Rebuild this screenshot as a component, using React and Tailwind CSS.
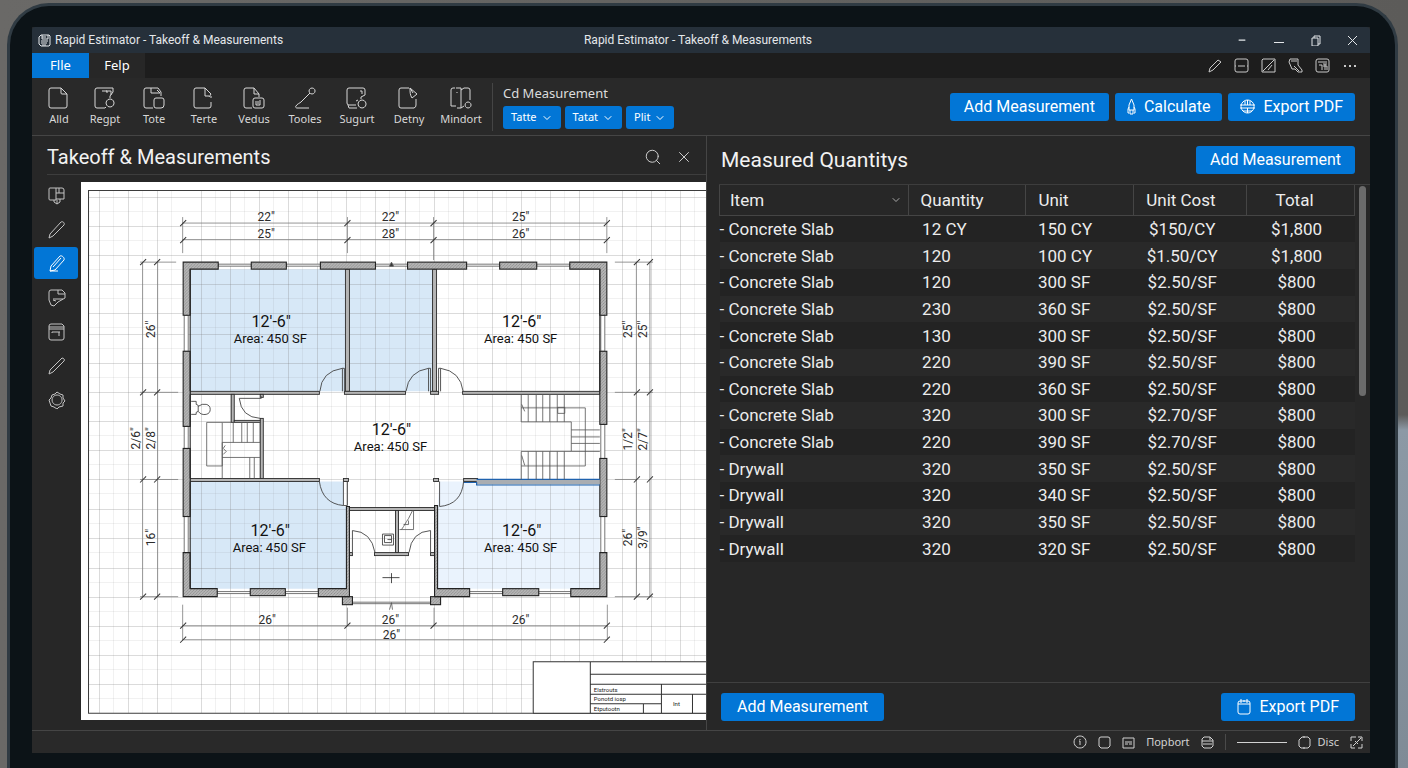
import { useState } from 'react';
import { ChevronDown, Minus, Search, X } from 'lucide-react';

const ribbonTools = [
  { label: 'Alld', width: 'w-11', d: 'M3 1h10l6 6v12a2 2 0 0 1-2 2H3a2 2 0 0 1-2-2V3a2 2 0 0 1 2-2zM13 1v5a1 1 0 0 0 1 1h5' },
  { label: 'Regpt', width: 'w-12', d: 'M11 21H3a2 2 0 0 1-2-2V3a2 2 0 0 1 2-2h16v4l-3 4v2M8 4h5v2M12 4h5v4M16 12a4 4 0 1 0 .1 0zM12 20l-1 1' },
  { label: 'Tote', width: 'w-[50px]', d: 'M10 21H3a2 2 0 0 1-2-2V3a2 2 0 0 1 2-2h12l3 4v4M8 1v5h9M14 3l3 3M13 11h6a2 2 0 0 1 2 2v5a3 3 0 0 1-3 3h-5a2 2 0 0 1-2-2v-6a2 2 0 0 1 2-2z' },
  { label: 'Terte', width: 'w-[50px]', d: 'M12 1H3a2 2 0 0 0-2 2v16a2 2 0 0 0 2 2h13a2 2 0 0 0 2-2v-4M12 1l6 6-2 3M12 1v8h4M18 9v2' },
  { label: 'Vedus', width: 'w-[50px]', d: 'M9 21H3a2 2 0 0 1-2-2V3a2 2 0 0 1 2-2h8l5 6v3M11 1v6h5M12 11h7a2 2 0 0 1 2 2v6a2 2 0 0 1-2 2h-7a2 2 0 0 1-2-2v-6a2 2 0 0 1 2-2zM13 14v4h4v-5M15 14v3' },
  { label: 'Tooles', width: 'w-[52px]', d: 'M18 1a3 3 0 1 0 .1 0zM16 6L7 15c-1 1-4 2-5 4-1 1 0 2 1 2h12' },
  { label: 'Sugurt', width: 'w-[52px]', d: 'M10 18H3a2 2 0 0 1-2-2V3a2 2 0 0 1 2-2h14a2 2 0 0 1 2 2v5l-4 2v2M14 4h2v3M2 18l1 3h8M16 13a4 4 0 1 0 .1 0zM10 14l2-1' },
  { label: 'Detny', width: 'w-[52px]', d: 'M11 1H3a2 2 0 0 0-2 2v16a2 2 0 0 0 2 2h13a3 3 0 0 0 2-3v-6M12 1l7 6-5 4c-2-3-2-6-2-10zM12 1l3 5' },
  { label: 'Mindort', width: 'w-[52px]', d: 'M5 1H3a2 2 0 0 0-2 2v16h5M6 1h5M11 1v20M11 3l3-2h4a2 2 0 0 1 2 2v10M7 21h4l3-2M18 15a3 3 0 1 0 .1 0zM7 5v1' },
];

const sideTools = [
  { label: 'Layers', d: 'M3 2h6v12H3a1 1 0 0 1-1-1V3a1 1 0 0 1 1-1zM9 2h6a2 2 0 0 1 2 2v9H9M9 7h8M12 2v5M7 14v2l3 2 3-2v-3M10 14v4' },
  { label: 'Line', d: 'M14 2c2-1 4 1 3 3L6 16l-4 2 1-4z' },
  { label: 'Highlighter', d: 'M13 2c2-1 5 2 4 4L8 16l-5 1 1-5zM6 13l8-9M3 17h8' },
  { label: 'Note', d: 'M2 4a2 2 0 0 1 2-2h11l3 3v5l-7 4-4 4-3-1-2-5zM11 2v4h7M6 11h10M6 12l3 1' },
  { label: 'Schedule', d: 'M4 2h11l2 2v12a2 2 0 0 1-2 2H4a2 2 0 0 1-2-2V4a2 2 0 0 1 2-2zM2 5h15M2 7h15M5 10h8M12 10v4M5 10v1' },
  { label: 'Cut', d: 'M15 2c2 0 3 2 2 3L6 16l-4 2 1-4z' },
  { label: 'Settings', d: 'M10 2l3 2 3 1v3l2 3-2 2v3l-4 1-2 2-3-2-3-1-1-3-1-3 2-2 1-3 3-1zM10 5a5 5 0 1 0 .1 0z' },
];

const quickActions = [
  { label: 'Edit', d: 'M12 3l3 2-8 8-4 2 1-4z' },
  { label: 'Panel', d: 'M4 2h9a2 2 0 0 1 2 2v9a2 2 0 0 1-2 2H4a2 2 0 0 1-2-2V4a2 2 0 0 1 2-2zM5 9h7M2 9h1M14 9h1' },
  { label: 'Contrast', d: 'M3 2h12v13H2V3zM3 14L14 3M8 13l4-5' },
  { label: 'Comment', d: 'M3 2h8v6l4 5v2h-4l-3-3H5L2 5zM4 4h6M7 9l5 5' },
  { label: 'Library', d: 'M4 2h9a2 2 0 0 1 2 2v9a2 2 0 0 1-2 2H4a2 2 0 0 1-2-2V4a2 2 0 0 1 2-2zM4 5h9M5 8h3v5M9 7h4M9 9h4v4M11 7v6' },
];

const rows = [
  ['Concrete Slab', '12 CY', '150 CY', '$150/CY', '$1,800'],
  ['Concrete Slab', '120', '100 CY', '$1.50/CY', '$1,800'],
  ['Concrete Slab', '120', '300 SF', '$2.50/SF', '$800'],
  ['Concrete Slab', '230', '360 SF', '$2.50/SF', '$800'],
  ['Concrete Slab', '130', '300 SF', '$2.50/SF', '$800'],
  ['Concrete Slab', '220', '390 SF', '$2.50/SF', '$800'],
  ['Concrete Slab', '220', '360 SF', '$2.50/SF', '$800'],
  ['Concrete Slab', '320', '300 SF', '$2.70/SF', '$800'],
  ['Concrete Slab', '220', '390 SF', '$2.70/SF', '$800'],
  ['Drywall', '320', '350 SF', '$2.50/SF', '$800'],
  ['Drywall', '320', '340 SF', '$2.50/SF', '$800'],
  ['Drywall', '320', '350 SF', '$2.50/SF', '$800'],
  ['Drywall', '320', '320 SF', '$2.50/SF', '$800'],
];

const Icon = ({ d, w = 18, h = w, className = '' }) => (
  <svg width={w} height={h} viewBox={`0 0 ${w} ${h}`} fill="none" stroke="currentColor" strokeWidth="1" strokeLinejoin="round" className={`shrink-0 ${className}`} aria-hidden="true">
    <path d={d} />
  </svg>
);

const BlueButton = ({ children, className = '' }) => (
  <button className={`flex h-7 items-center justify-center gap-2 rounded-[3px] bg-[#0276d6] font-[Roboto,sans-serif] text-base text-white hover:bg-[#1a86e0] ${className}`}>
    {children}
  </button>
);

/* ---------- floor plan ---------- */

const gridX = [99.5, 128.5, 157.5, 201.5, 230.5, 259.5, 288.5, 317.5, 346.5, 375.5, 404.5, 433.5, 462.5, 491.5, 520.5, 549.5, 578.5, 621.5, 650.5, 679.5];
const gridY = [197.5, 226.5, 255.5, 284.5, 313.5, 334.5, 363.5, 392.5, 421.5, 450.5, 479.5, 508.5, 537.5, 567.5, 596.5, 625.5, 654.5, 683.5];

// x, y, width, height
const outerWalls = [
  [251, 262, 35, 7], [320, 262, 55, 7], [407, 262, 59, 7], [499, 262, 37, 7],
  [183, 351, 7, 75], [183, 448, 7, 68], [599, 351, 7, 73], [599, 458, 7, 58],
  [250, 588, 35, 7], [502, 588, 36, 7],
  [342, 596, 10, 8], [430, 596, 10, 8],
];
const cornerWalls = [
  'M183 262h35v7h-28v46h-7z',
  'M606 262h-37v7h30v46h7z',
  'M183 596h34v-8h-27v-36h-7z',
  'M606 596h-36v-8h29v-36h7z',
  'M318 588h28v-82h3v90h-31z',
  'M469 588h-32v-83h-3v91h35z',
];
const innerWalls = [
  [345, 269, 4, 122], [432, 269, 4, 122], [190, 391, 129, 3], [344, 391, 61, 3],
  [430, 391, 8, 3], [462, 391, 137, 3], [190, 478, 129, 3], [343, 478, 5, 3],
  [433, 478, 5, 3], [463, 478, 14, 3], [348, 507, 88, 3], [395, 510, 3, 42],
  [374, 552, 34, 3], [348, 552, 4, 3], [430, 552, 4, 3], [231, 394, 3, 28],
  [234, 420, 28, 2], [260, 418, 3, 60], [260, 394, 3, 3],
];
const windowsH = [[218, 264, 33], [286, 264, 34], [375, 264, 32], [466, 264, 33], [536, 264, 33], [217, 591, 33], [285, 591, 33], [469, 591, 33], [538, 591, 32]];
const windowsV = [[184, 315, 36], [184, 426, 22], [184, 516, 36], [600, 315, 36], [600, 424, 34], [600, 516, 36]];

const roomLabels = [[271, 328], [521, 328], [391, 436], [270, 536], [521, 536]];

const horizontalDims = [
  [266, 221, '22"'], [266, 238, '25"'], [390, 221, '22"'], [390, 238, '28"'], [520, 221, '25"'], [520, 238, '26"'],
  [267, 623, '26"'], [390, 623, '26"'], [520, 623, '26"'], [391, 638, '26"'],
];
const verticalDims = [
  [155, 329, '26"'], [140, 438, '2/6"'], [155, 438, '2/8"'], [155, 537, '16"'],
  [631, 329, '25"'], [646, 329, '25"'], [631, 439, '1/2"'], [646, 439, '2/7"'], [631, 537, '26"'], [646, 537, '3/9"'],
];

const ticks = [
  ...[183, 347, 433, 606].flatMap((x) => [[x, 223], [x, 240], [x, 625]]),
  [183, 639], [606, 639],
  ...[262, 392, 479, 596].flatMap((y) => [[143, y], [157, y], [636, y], [649, y]]),
];

const FloorPlan = () => (
  <svg viewBox="81 182 624 538" preserveAspectRatio="xMinYMin slice" className="block h-full w-full bg-white" role="img" aria-label="Floor plan">
    <defs>
      <pattern id="hatch" width="3" height="3" patternUnits="userSpaceOnUse">
        <rect width="3" height="3" fill="#b4b4b4" />
        <path d="M0 3L3 0" stroke="#8a8a8a" strokeWidth="0.7" />
      </pattern>
    </defs>

    <g fill="#d7e8f7">
      <path d="M190 269h155v122H190zM349 269h83v122h-83zM190 481h153v25h3v82H190z" />
      <path d="M437 506l2-25h24l14 3h122v104H437z" fill="#eaf3fd" />
    </g>

    <g stroke="#8c8c8c" strokeOpacity="0.12" shapeRendering="crispEdges">
      {gridX.map((x) => <path key={x} d={`M${x + 14} 190V712`} />)}
      {gridY.map((y) => <path key={y} d={`M88 ${y + 14}H705`} />)}
    </g>
    <g stroke="#7c7c7c" strokeOpacity="0.28" shapeRendering="crispEdges">
      {gridX.map((x) => <path key={x} d={`M${x} 190V712`} />)}
      {gridY.map((y) => <path key={y} d={`M88 ${y}H705`} />)}
    </g>
    <path d="M705 190.500H88.500V712.500H705" fill="none" stroke="#3c3c3c" />

    {/* dimension lines */}
    <g fill="none" stroke="#7d7d7d" strokeWidth="0.8">
      <path d="M182 223H606M182 239.500H606M182 625H606M182 639H606" />
      <path d="M142.500 262V596M157.500 262V596M635.500 262V596M649 262V596" />
      <path d="M182.500 217V253M347 217V253M433 217V260M606 217V253M182.500 604V639M347 607V625M433.500 607V625M606.500 604V639" />
      <path d="M140 262H176M140 392H178M140 479H178M140 596H178M614 262H652M614 392H652M614 479H636M614 596H652" />
    </g>
    <g stroke="#333" strokeWidth="1">
      {ticks.map(([x, y]) => <path key={`${x}-${y}`} d={`M${x - 3} ${y + 3}l6-6`} />)}
    </g>

    {/* windows */}
    <g fill="#fff" stroke="#555" strokeWidth="0.8">
      {windowsH.map(([x, y, w]) => <rect key={`${x}-${y}`} x={x} y={y} width={w} height="2" />)}
      {windowsV.map(([x, y, h]) => <rect key={`${x}-${y}`} x={x} y={y} width="4" height={h} />)}
      <path d="M352 601.500H430M352 603H430" />
    </g>

    {/* walls */}
    <g fill="#b5b5b5" stroke="#2b2b2b" strokeWidth="0.9">
      {innerWalls.map(([x, y, w, h]) => <rect key={`${x}-${y}`} x={x} y={y} width={w} height={h} />)}
    </g>
    <g fill="url(#hatch)" stroke="#222" strokeWidth="1.1">
      {outerWalls.map(([x, y, w, h]) => <rect key={`${x}-${y}`} x={x} y={y} width={w} height={h} />)}
      {cornerWalls.map((d) => <path key={d} d={d} />)}
    </g>
    <path d="M190 391V269M190 588V481M190 478V394M599 269V391" fill="none" stroke="#222" strokeWidth="1.1" />
    <rect x="476" y="479" width="123" height="5" fill="#a9adb2" />
    <path d="M463 482h13v2.500h123M476 479h123" fill="none" stroke="#1f62ae" strokeWidth="1.2" />

    {/* doors */}
    <g fill="none" stroke="#444" strokeWidth="0.9">
      <path d="M342 391V368h2v23M342 368Q321 371 319.500 391" />
      <path d="M428 391V368h2v23M428 368Q408 371 405.500 391" />
      <path d="M438 391V368h2v23M440 368Q460 371 462.500 391" />
      <path d="M343 481v24h4v-24M343 505Q322 503 319 481" />
      <path d="M439 481v25M439 506Q461 504 463 481" />
      <path d="M352 552V530M352 530Q371 531 374.500 552" />
      <path d="M430 552V530M430 530Q411 531 408.500 552" />
      <path d="M239 398h22v-2M239 398Q241 417 260 418" />
    </g>

    {/* stairs and fixtures */}
    <g fill="none" stroke="#555" strokeWidth="0.8">
      <path d="M206.500 422H222V465.500H206.500zM222 422h38v20h-38v36M222 457h38M233 422v20M241.500 422v20M247 422v20M253 422v20M249.500 457v21M254 457v21M225 445l-2 3 3 3-3 3" />
      <path d="M520.500 421.500V394M527.500 394v27.500M535.500 394v27.500M542 394v27.500M549 394v27.500M556.500 394v27.500M563.500 394v27.500M520.500 421.500h50V451h-50v28M527.500 451v28M535.500 451v28M542 451v28M549 451v28M556.500 451v28M563.500 451v28" />
      <path d="M570.500 429.500H599M570.500 436.500H599M570.500 443H599M570.500 451H599M520.500 407.500H584.500V465.500H520.500M521 404l3 7M521 455l3 10M557 407h7v6h-7z" />
      <path d="M191 401h5v3l2 1v6l-2 1v2h-5M198 406q4-3 8-2 4 1 4 5t-4 5q-5 1-8-3" stroke="#333" />
      <path d="M382 533.500h11v11h-11zM384 535h7v7h-7zM387 539h4" stroke="#333" />
      <path d="M413 510V529H399M412 510l-4 8-2 3-3 5-2 3M403 524h5v-4" />
      <path d="M382 577h17M391 572.500v10" stroke="#222" />
      <path d="M389 609l2-7 1 7" />
      <path d="M389 266l2-4 2 4z" fill="#333" />
    </g>

    {/* title block */}
    <path d="M532 661H705V712.500H532z" fill="#fff" />
    <path d="M532.500 712V661H705M589.500 661V712M589.500 673.500H705M589.500 683.500H705M589.500 693.500H705M589.500 703H660.500M660.500 683.500V712M642.500 703V712M691.500 693.500V712M532 712.500H705" fill="none" stroke="#333" />
    <g fontSize="6" fill="#222" fontFamily="Roboto, sans-serif">
      <text x="593" y="691">Elstrouts</text>
      <text x="593" y="700">Ponotd iosp</text>
      <text x="593" y="710">Etputootn</text>
      <text x="672" y="705">Int</text>
    </g>

    <g fontSize="12" fill="#2b2b2b" textAnchor="middle" fontFamily="Roboto, sans-serif">
      {horizontalDims.map(([x, y, t]) => <text key={`${x}-${y}`} x={x} y={y}>{t}</text>)}
      {verticalDims.map(([x, y, t]) => <text key={`${x}-${y}`} transform={`translate(${x} ${y}) rotate(-90)`}>{t}</text>)}
    </g>
    <g fill="#111" textAnchor="middle" fontFamily="Roboto, sans-serif">
      {roomLabels.map(([x, y]) => (
        <g key={`${x}-${y}`}>
          <text x={x} y={y - 1} fontSize="16">12&apos;-6&quot;</text>
          <text x={x - 1} y={y + 15} fontSize="13">Area: 450 SF</text>
        </g>
      ))}
    </g>
  </svg>
);

/* ---------- app chrome ---------- */

const TitleBar = () => (
  <div className="grid h-[26px] shrink-0 grid-cols-[1fr_auto_1fr] items-center rounded-t-[3px] bg-[#26303a] pr-3 pl-[6px] font-[Roboto,sans-serif] text-xs text-[#e4e7ea]">
    <div className="flex items-center gap-1">
      <Icon w={13} d="M3 1h8l1 1v9l-1 1H3l-2-2V3zM4 1v4h6V1M4 3h4M3 7h7M3 9h6M4 11h4" />
      <span>Rapid Estimator - Takeoff &amp; Measurements</span>
    </div>
    <span>Rapid Estimator - Takeoff &amp; Measurements</span>
    <div className="flex justify-end gap-[26px]">
      <button aria-label="Hide"><Minus size={10} strokeWidth={3} /></button>
      <button aria-label="Minimize"><Icon w={11} d="M1 7.500h10" /></button>
      <button aria-label="Restore"><Icon w={11} d="M2 3h6v8H2zM4 3V1h6v8H8" /></button>
      <button aria-label="Close"><Icon w={11} d="M1 1l9 9M10 1l-9 9" /></button>
    </div>
  </div>
);

const MenuBar = () => (
  <nav className="flex h-[25px] shrink-0 bg-[#1d1d1d] text-[13px] text-white">
    <button className="w-[57px] bg-[#0276d6]">Flle</button>
    <button className="w-14 bg-[#272727]">Felp</button>
    <div className="ml-auto flex items-center gap-[10px] pr-3 text-[#c9c9c9]">
      {quickActions.map((a) => (
        <button key={a.label} aria-label={a.label}><Icon w={17} d={a.d} /></button>
      ))}
      <button aria-label="More">
        <svg width="17" height="17" viewBox="0 0 17 17" fill="currentColor"><path d="M3 8h2v2H3zM8 8h2v2H8zM13 8h2v2h-2z" /></svg>
      </button>
    </div>
  </nav>
);

const Ribbon = () => (
  <div className="flex h-[58px] shrink-0 items-center border-b border-[#454545] bg-[#292929] pr-[15px] pl-[5px]">
    {ribbonTools.map((t) => (
      <button key={t.label} className={`flex shrink-0 flex-col items-center gap-[2px] text-[11px] leading-4 text-[#d8d8d8] ${t.width}`}>
        <Icon w={22} d={t.d} />
        {t.label}
      </button>
    ))}
    <div className="ml-[5px] h-12 w-px bg-[#454545]" />
    <div className="ml-[10px] flex flex-col gap-1">
      <span className="text-[13px] leading-[18px] text-[#dcdcdc]">Cd Measurement</span>
      <div className="flex gap-1">
        {['Tatte', 'Tatat', 'Plit'].map((label) => (
          <button key={label} className="flex h-[23px] items-center gap-1 rounded-[3px] bg-[#0276d6] px-2 text-[11px] text-white">
            {label}
            <ChevronDown size={12} strokeWidth={2} />
          </button>
        ))}
      </div>
    </div>
    <div className="ml-auto flex gap-[6px]">
      <BlueButton className="px-[14px]">Add Measurement</BlueButton>
      <BlueButton className="px-3">
        <Icon w={9} h={17} d="M4.500 1L7 7v5H2V7zM2 9L1 11v4h1M7 9l1 2v4H7M3 12v4h3v-4" />
        Calculate
      </BlueButton>
      <BlueButton className="px-3">
        <Icon w={15} d="M7.500 1a6.500 6.500 0 1 0 .1 0zM0 6h15M0 9h15M7.500 1v5M5 2v4M10 2v4M3 12h9M7.500 9v5" />
        Export PDF
      </BlueButton>
    </div>
  </div>
);

const TakeoffPanel = () => {
  const [tool, setTool] = useState('Highlighter');

  return (
    <section className="flex min-w-0 flex-[674] flex-col border-r border-[#454545]">
      <header className="ml-[15px] flex h-[39px] shrink-0 items-center border-b border-[#3d3d3d] pt-1">
        <h2 className="text-xl leading-6 text-[#f2f2f2]">Takeoff &amp; Measurements</h2>
        <div className="ml-auto flex gap-[13px] pr-[13px] text-[#d0d0d0]">
          <button aria-label="Search"><Search size={18} strokeWidth={1.300} /></button>
          <button aria-label="Close panel"><X size={18} strokeWidth={1.300} /></button>
        </div>
      </header>
      <div className="flex min-h-0 flex-1 pb-[10px]">
        <div className="flex w-[49px] shrink-0 flex-col gap-[2px] pt-1 pl-[2px]">
          {sideTools.map((t) => (
            <button
              key={t.label}
              aria-label={t.label}
              onClick={() => setTool(t.label)}
              className={`flex h-8 w-11 items-center justify-center rounded-[3px] ${tool === t.label ? 'bg-[#0276d6] text-white' : 'text-[#c4c4c4]'}`}
            >
              <Icon w={19} d={t.d} />
            </button>
          ))}
        </div>
        <div className="min-w-0 flex-1 pt-[7px]">
          <FloorPlan />
        </div>
      </div>
    </section>
  );
};

const QuantitiesPanel = () => (
  <section className="flex min-w-0 flex-[663] flex-col">
    <header className="flex h-12 shrink-0 items-center justify-between pr-[15px] pl-[14px]">
      <h2 className="text-[21px] leading-6 text-[#f2f2f2]">Measured Quantitys</h2>
      <BlueButton className="px-[14px]">Add Measurement</BlueButton>
    </header>
    <div className="ml-3 flex min-h-0 flex-1 items-start border-t border-[#3d3d3d]">
      <table className="h-[377px] flex-1 table-fixed border-collapse text-left text-[17px] leading-5 text-[#ececec]">
        <thead>
          <tr className="h-[30px] border-b border-[#454545]">
            <th className="w-[189px] border-x border-[#454545] px-[10px] font-normal">
              <div className="flex items-center justify-between">
                Item
                <ChevronDown size={12} strokeWidth={2} className="-mr-1 text-[#a8a8a8]" />
              </div>
            </th>
            <th className="w-[118px] border-r border-[#454545] pl-3 font-normal">Quantity</th>
            <th className="w-[108px] border-r border-[#454545] pl-3 font-normal">Unit</th>
            <th className="w-[113px] border-r border-[#454545] pl-3 font-normal">Unit Cost</th>
            <th className="w-[108px] border-r border-[#454545] pr-3 text-center font-normal">Total</th>
          </tr>
        </thead>
        <tbody>
          {rows.map(([item, qty, unit, cost, total], i) => (
            <tr key={i} className="odd:bg-[#232323] even:bg-[#292929]">
              <td>- {item}</td>
              <td className="pl-[14px]">{qty}</td>
              <td className="pl-3">{unit}</td>
              <td className="pr-4 text-center">{cost}</td>
              <td className="pr-2 text-center">{total}</td>
            </tr>
          ))}
        </tbody>
      </table>
      <div className="mt-px mr-1 ml-1 h-[210px] w-[7px] rounded-full bg-[#6b6b6b]" />
    </div>
    <footer className="flex h-[48px] shrink-0 items-center justify-between border-t border-[#404040] pr-[15px] pl-[14px]">
      <BlueButton className="px-4">Add Measurement</BlueButton>
      <BlueButton className="px-4">
        <Icon w={14} h={16} d="M3 2h8a2 2 0 0 1 2 2v9a2 2 0 0 1-2 2H3a2 2 0 0 1-2-2V4a2 2 0 0 1 2-2zM1 5h12M4 0v4M10 0v4M7 1v2" />
        Export PDF
      </BlueButton>
    </footer>
  </section>
);

const StatusBar = () => (
  <footer className="flex h-[23px] shrink-0 items-center justify-end gap-[11px] border-t border-[#454545] bg-[#292929] pr-[7px] text-[11px] text-[#d2d2d2]">
    <Icon w={14} d="M7 1a6 6 0 1 0 .1 0zM7 6v4M7 4v1M6 6h1" />
    <Icon w={13} d="M3 1h7a2 2 0 0 1 2 2v7l-2 2H3l-2-2V3a2 2 0 0 1 2-2z" />
    <Icon w={13} d="M1 2h11v10H1zM3 6h7M3 8h3M7 8h3" />
    <span>Пopbort</span>
    <Icon w={13} d="M3 1h6l3 3v6l-2 2H3l-2-2V3zM1 5h11M2 8h9M9 1v3" />
    <div className="h-4 w-px bg-[#4a4a4a]" />
    <div className="h-px w-[50px] bg-[#d2d2d2]" />
    <div className="flex items-center gap-[7px]">
      <Icon w={13} d="M4 1h6l2 2v7l-2 2H3l-2-2V4zM6 0v2M6 11v2" />
      <span>Disc</span>
    </div>
    <Icon w={13} d="M1 5V1h5M8 1h4v4M12 8v4H8M5 12H1V8M3 10l8-8M5 5l3 3" />
  </footer>
);

export default function App() {
  return (
    <div className="h-screen overflow-hidden bg-[linear-gradient(to_right,#6a6967,#5c5b59)]">
      <div className="h-full bg-[linear-gradient(to_bottom,transparent_54%,#8c99a5_56%,#7f8b96)] bg-[length:50%_100%] bg-right bg-no-repeat pt-[3px] pr-[10px] pl-[7px] font-['Noto_Sans',sans-serif]">
        <div className="h-full rounded-t-[42px] border-x-[3px] border-t-[3px] border-[#303b43] bg-[#0c1317] pt-[21px] pr-[25px] pb-[15px] pl-[22px]">
          <div className="flex h-full flex-col bg-[#272727]">
            <TitleBar />
            <MenuBar />
            <Ribbon />
            <main className="flex min-h-0 flex-1 font-[Roboto,sans-serif]">
              <TakeoffPanel />
              <QuantitiesPanel />
            </main>
            <StatusBar />
          </div>
        </div>
      </div>
    </div>
  );
}
